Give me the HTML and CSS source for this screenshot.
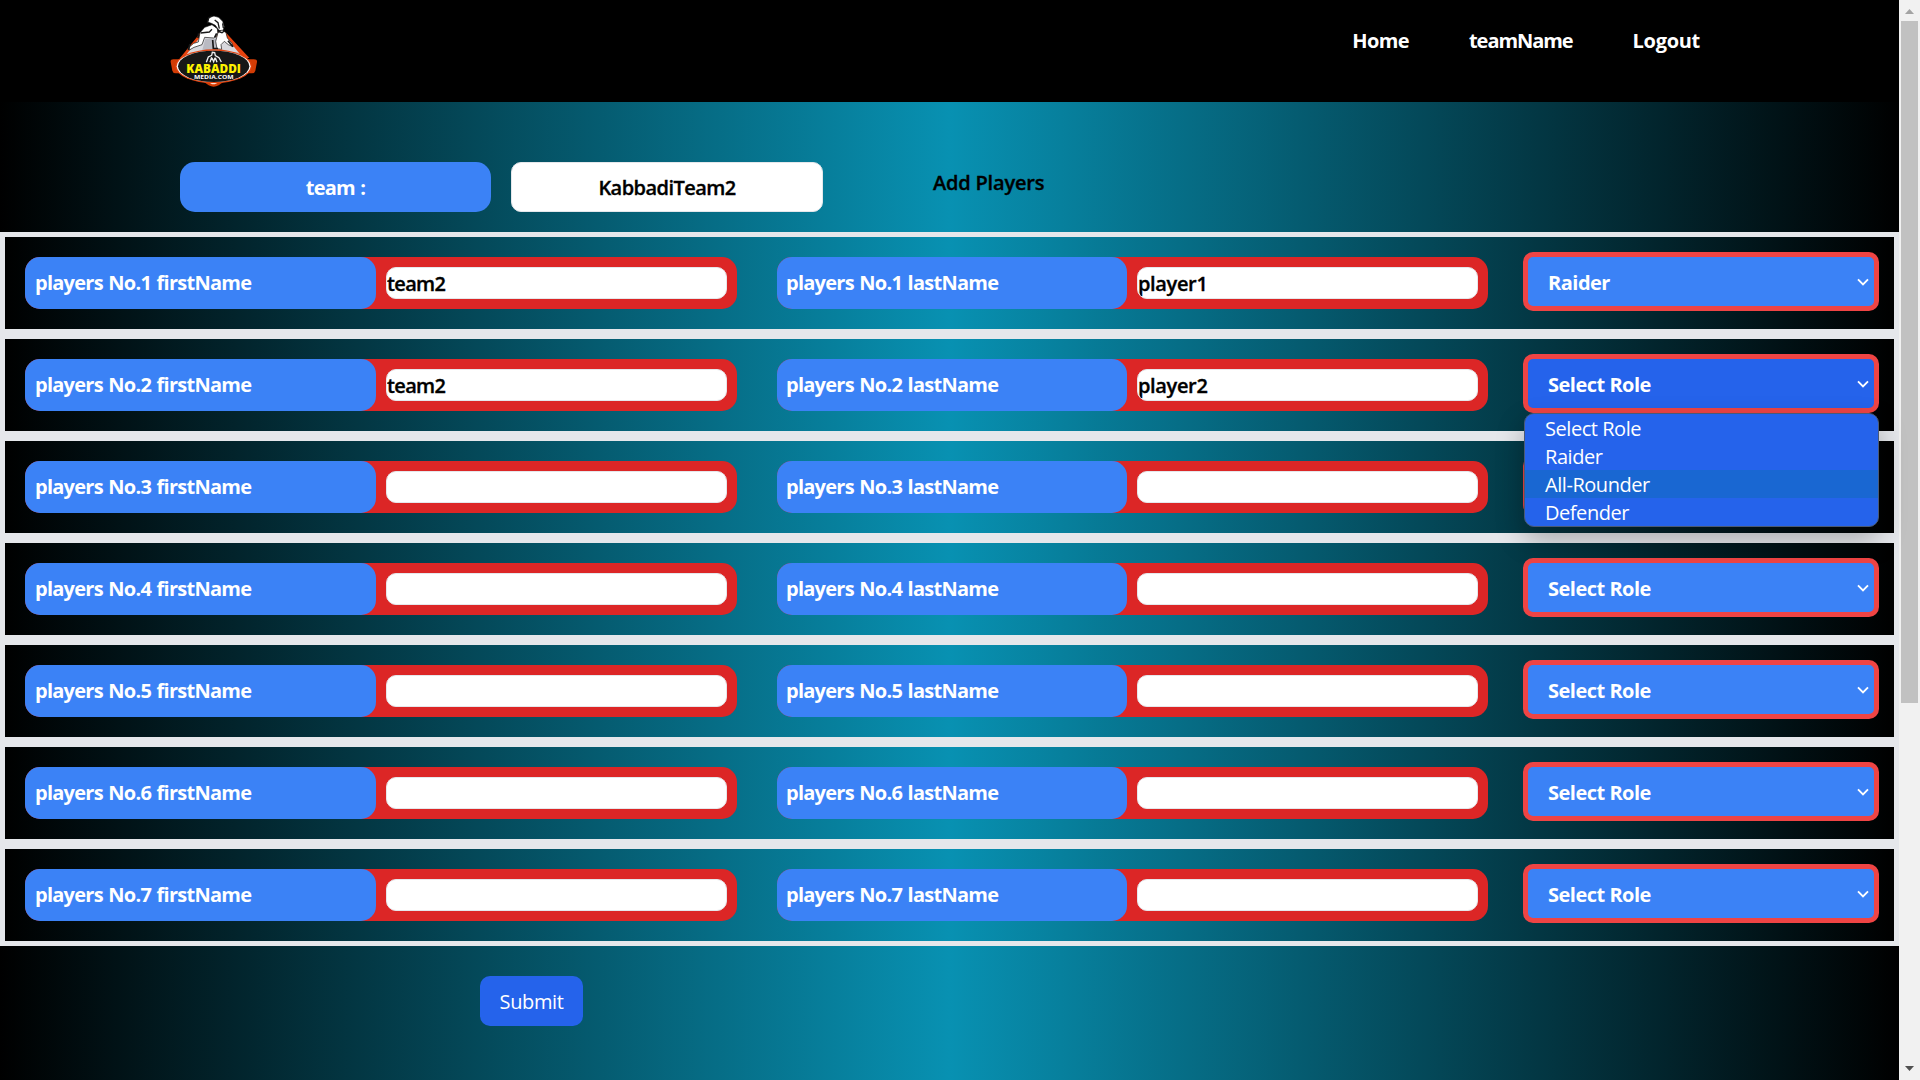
FILE: index.html
```html
<!DOCTYPE html>
<html lang="en">
<head>
<meta charset="utf-8">
<title>Add Players</title>
<link rel="stylesheet" href="styles.css">
</head>
<body>
<div class="page">
  <header class="navbar">
    <svg class="logo" viewBox="60 39 264 225" role="img" aria-label="Kabaddi Media logo">
      <path d="M70 178h242q10 0 9 8l-5 26q-2 8-10 8h-48l-52 36q-15 8-30 0l-52-36H77q-8 0-10-8l-5-26q-1-8 8-8z" fill="#d23c05"/>
      <path d="M150 100L90 174H298L226 96z" fill="#e8430f"/>
      <path d="M150 112L104 170H276L226 108z" fill="#d9d9de"/>
      <path d="M166 116h46v38h-56z" fill="#b9bac2"/>
      <path d="M150 98l14-16 22-8 16 12 2 18-12 10-28-2-8 22-24 8-14 8-1-8 14-12 14-4z" fill="#fff" stroke="#111" stroke-width="2"/>
      <path d="M172 66l6-14 14-4 14 4 12 12 5 16-5 14-12-4-10-14-12-6z" fill="#fff" stroke="#111" stroke-width="2"/>
      <path d="M204 98l12-8 12 8 4 16 14 16 3 10-14-6-12-10-10 10 2 14-14-2-4-22z" fill="#fff" stroke="#111" stroke-width="2"/>
      <path d="M172 70l4-16 10-6M194 60l10 8 4 18M152 99l26-3 8-8M204 94l12 4 8-6M218 70l2 14" fill="none" stroke="#181818" stroke-width="4"/>
      <path d="M115 150l5-18M234 122l15 18M188 120l2 26h14M146 100l-2 14M200 100l-6 12" fill="none" stroke="#181818" stroke-width="5"/>
      <ellipse cx="191" cy="199" rx="115" ry="51" fill="#e2430f"/>
      <ellipse cx="191" cy="199" rx="111" ry="47" fill="#fff"/>
      <ellipse cx="191" cy="199" rx="107" ry="47" fill="#171717"/>
      <path d="M169 187l6-16 10-5 2-9 7 1 2 9 11 6 7 13M180 187l5-15M201 187l-5-14M186 174l5 11 4-12" fill="none" stroke="#eee" stroke-width="4"/>
      <text class="logo-name" x="109" y="218" textLength="164" lengthAdjust="spacingAndGlyphs">KABADDI</text>
      <text class="logo-site" x="132" y="236" textLength="119" lengthAdjust="spacingAndGlyphs">MEDIA.COM</text>
      <path d="M180 249h22l-8 4h-8z" fill="#ffe2d3"/>
    </svg>
    <nav class="nav-links">
      <a class="nav-home">Home</a>
      <a class="nav-team">teamName</a>
      <a class="nav-logout">Logout</a>
    </nav>
  </header>

  <section class="team-bar">
    <div class="team-label">team :</div>
    <div class="team-value">KabbadiTeam2</div>
    <h1 class="title">Add Players</h1>
  </section>

  <main class="rows">
    <div class="row">
      <div class="field"><label>players No.1 firstName</label><input value="team2"></div>
      <div class="field"><label>players No.1 lastName</label><input value="player1"></div>
      <div class="role">Raider<svg viewBox="0 0 12 8"><path d="M1 1.3l5 5 5-5"/></svg></div>
    </div>
    <div class="row">
      <div class="field"><label>players No.2 firstName</label><input value="team2"></div>
      <div class="field"><label>players No.2 lastName</label><input value="player2"></div>
      <div class="role role-open">Select Role<svg viewBox="0 0 12 8"><path d="M1 1.3l5 5 5-5"/></svg>
        <ul class="options">
          <li>Select Role</li>
          <li>Raider</li>
          <li class="active">All-Rounder</li>
          <li>Defender</li>
        </ul>
      </div>
    </div>
    <div class="row">
      <div class="field"><label>players No.3 firstName</label><input></div>
      <div class="field"><label>players No.3 lastName</label><input></div>
      <div class="role"><svg viewBox="0 0 12 8"><path d="M1 1.3l5 5 5-5"/></svg></div>
    </div>
    <div class="row">
      <div class="field"><label>players No.4 firstName</label><input></div>
      <div class="field"><label>players No.4 lastName</label><input></div>
      <div class="role">Select Role<svg viewBox="0 0 12 8"><path d="M1 1.3l5 5 5-5"/></svg></div>
    </div>
    <div class="row">
      <div class="field"><label>players No.5 firstName</label><input></div>
      <div class="field"><label>players No.5 lastName</label><input></div>
      <div class="role">Select Role<svg viewBox="0 0 12 8"><path d="M1 1.3l5 5 5-5"/></svg></div>
    </div>
    <div class="row">
      <div class="field"><label>players No.6 firstName</label><input></div>
      <div class="field"><label>players No.6 lastName</label><input></div>
      <div class="role">Select Role<svg viewBox="0 0 12 8"><path d="M1 1.3l5 5 5-5"/></svg></div>
    </div>
    <div class="row">
      <div class="field"><label>players No.7 firstName</label><input></div>
      <div class="field"><label>players No.7 lastName</label><input></div>
      <div class="role">Select Role<svg viewBox="0 0 12 8"><path d="M1 1.3l5 5 5-5"/></svg></div>
    </div>
  </main>

  <button class="submit" type="button">Submit</button>
</div>
<aside class="scrollbar">
  <svg class="arrow-up" viewBox="0 0 9 5"><path d="M4.5 0L9 5H0z"/></svg>
  <div class="thumb"></div>
  <svg class="arrow-down" viewBox="0 0 9 5"><path d="M0 0h9L4.5 5z"/></svg>
</aside>
</body>
</html>
```
FILE: styles.css
```css
* { box-sizing: border-box; }

body {
  margin: 0;
  height: 1080px;
  overflow: hidden;
  display: grid;
  grid-template-columns: 1899px 21px;
  background: #000;
  color: #000;
  font: 20px/30px "Open Sans", "Noto Sans", sans-serif;
}

.page {
  height: 1080px;
  background: linear-gradient(to right, #000, #0891b2, #000);
}

.navbar {
  height: 102px;
  display: flex;
  justify-content: space-between;
  align-items: flex-start;
  padding: 13px 199px 0 170px;
  background: #000;
}
.logo { width: 88px; height: 75px; }
.logo-name { font: 800 39px "Open Sans", sans-serif; fill: #fff200; }
.logo-site { font: 700 17px "Open Sans", sans-serif; fill: #fff; }

.nav-links {
  display: flex;
  gap: 60px;
  padding-top: 13px;
  color: #fff;
  font-weight: 700;
}
.nav-home { letter-spacing: -0.6px; }
.nav-team { letter-spacing: -1.05px; }
.nav-logout { letter-spacing: -0.3px; }

.team-bar {
  height: 130px;
  display: flex;
  gap: 20px;
  padding: 60px 0 0 180px;
}
.team-label, .team-value {
  height: 50px;
  display: flex;
  align-items: center;
  justify-content: center;
  padding-top: 2px;
}
.team-label {
  width: 311px;
  border-radius: 15px;
  background: #3b82f6;
  color: #fff;
  font-weight: 700;
  letter-spacing: -0.8px;
  word-spacing: 1px;
}
.team-value {
  width: 312px;
  border: 1px solid #e5e7eb;
  border-radius: 10px;
  background: #fff;
  font-weight: 600;
  letter-spacing: -0.55px;
}
.title {
  margin: 6px 0 0 90px;
  font-size: 20px;
  line-height: 30px;
  font-weight: 600;
  letter-spacing: -0.2px;
}
.team-value, .title, .field input { -webkit-text-stroke: 0.35px #000; }

.row {
  height: 102px;
  display: flex;
  align-items: flex-start;
  padding: 15px 15px 0 20px;
  border: 5px solid #e5e7eb;
  background: linear-gradient(to right, #000, #0891b2, #000);
}
.field {
  width: 712px;
  height: 52px;
  display: flex;
  align-items: center;
  margin: 5px 40px 0 0;
  border-radius: 15px;
  background: #dc2626;
}
.field label {
  width: 351px;
  height: 52px;
  padding: 11px 10px;
  border-radius: 15px;
  background: #3b82f6;
  color: #fff;
  font-weight: 700;
  letter-spacing: -0.74px;
  word-spacing: 1px;
}
.field input {
  flex: 1;
  min-width: 0;
  height: 32px;
  margin: 0 10px;
  padding: 1px 0 0;
  border: 1px solid #e5e7eb;
  border-radius: 10px;
  background: #fff;
  color: #000;
  font: 600 20px "Open Sans", "Noto Sans", sans-serif;
  letter-spacing: -0.65px;
}
.field + .field { width: 711px; margin-right: 35px; }
.field + .field label { width: 350px; padding-left: 9px; }
.field + .field input { letter-spacing: -0.35px; }

.role {
  position: relative;
  width: 356px;
  height: 59px;
  display: flex;
  align-items: center;
  justify-content: space-between;
  padding: 3px 5px 0 20px;
  border: 5px solid #ef4444;
  border-radius: 10px;
  background: #3b82f6;
  color: #fff;
  font-weight: 700;
  letter-spacing: -0.5px;
}
.role svg {
  width: 12px;
  height: 8px;
  margin: -3px 0 0 auto;
  fill: none;
  stroke: #fff;
  stroke-width: 1.9;
}
.role-open { background: #2563eb; }

.options {
  position: absolute;
  z-index: 2;
  top: 54px;
  left: -4px;
  width: 355px;
  margin: 0;
  padding: 0;
  overflow: hidden;
  list-style: none;
  border: 1px solid #4a5a76;
  border-radius: 10px;
  background: #2563eb;
  box-shadow: 0 12px 28px rgba(0, 0, 0, 0.28);
  font-weight: 400;
  letter-spacing: -0.45px;
}
.options li { height: 28px; padding-left: 20px; line-height: 30px; }
.options .active { background: #1967d2; }

.submit {
  display: block;
  width: 103px;
  height: 50px;
  margin: 30px 0 0 480px;
  padding: 0;
  border: 0;
  border-radius: 10px;
  background: #2563eb;
  color: #fff;
  font: 400 20px "Open Sans", "Noto Sans", sans-serif;
  letter-spacing: -0.4px;
}

.scrollbar {
  display: flex;
  flex-direction: column;
  align-items: center;
  padding: 9px 0;
  background: #f1f1f1;
}
.scrollbar svg { width: 9px; height: 5px; }
.arrow-up { fill: #a3a3a3; }
.arrow-down { margin-top: auto; fill: #505050; }
.thumb { width: 17px; height: 682px; margin-top: 7px; background: #c1c1c1; }
```
